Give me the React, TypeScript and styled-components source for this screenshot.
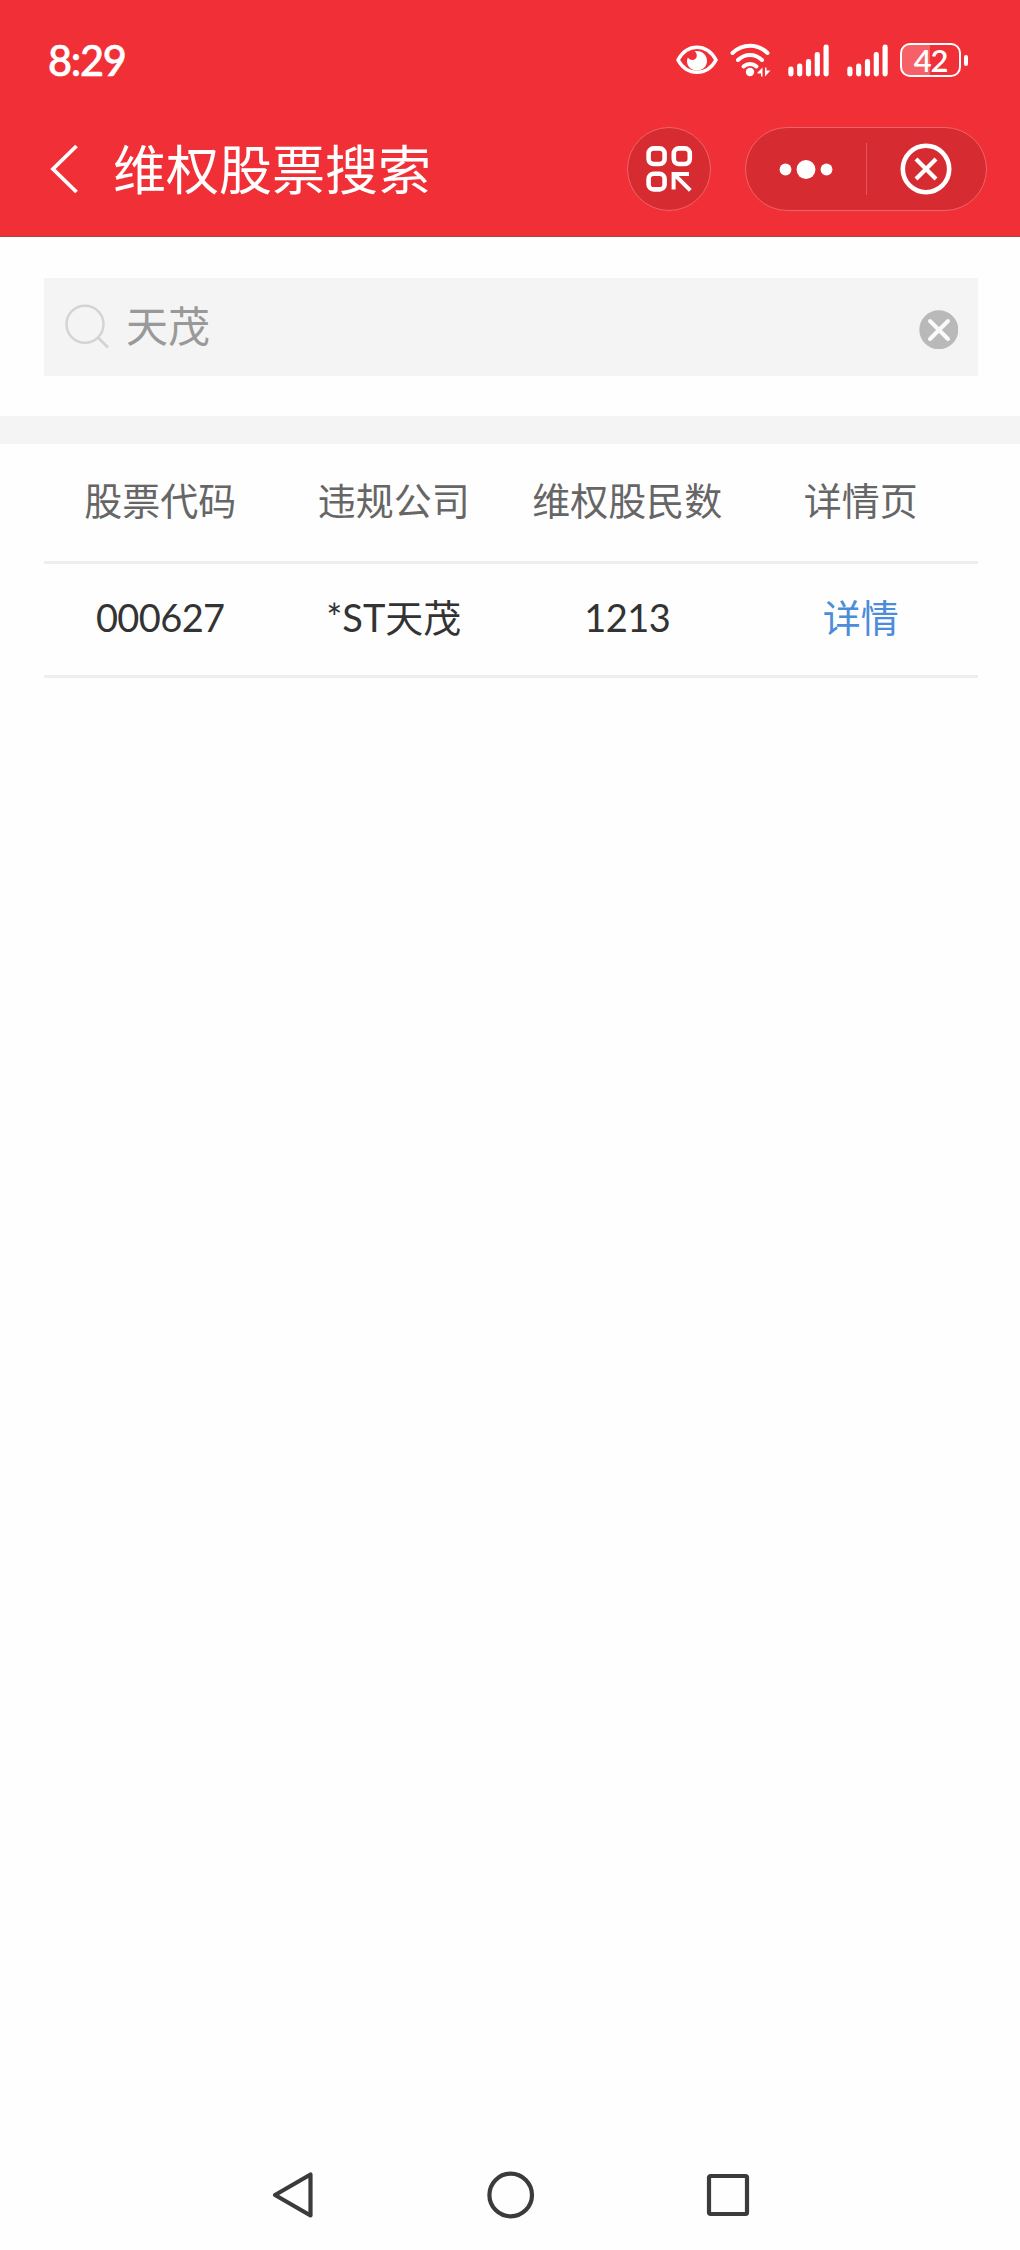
import React from 'react';
import styled, { createGlobalStyle } from 'styled-components';

const GlobalStyle = createGlobalStyle`
  * { box-sizing: border-box; }
  body {
    margin: 0;
    background: #fefefe;
    font-family: Lato, 'Noto Sans CJK SC', sans-serif;
  }
  svg { display: block; flex: none; }
`;

const Screen = styled.div`
  display: flex;
  flex-direction: column;
  width: 1020px;
  height: 2250px;
  background: #fefefe;
`;

const Header = styled.header`
  height: 237px;
  background: #f12f37;
  border-bottom: 1px solid #a8454d;
  color: #fff;
`;

const StatusBar = styled.div`
  display: flex;
  align-items: center;
  justify-content: space-between;
  height: 120px;
  padding: 0 52px 0 48px;
`;

const Clock = styled.time`
  font-size: 41.5px;
  font-weight: 500;
  line-height: 50px;
  letter-spacing: -1.3px;
  -webkit-text-stroke: 0.6px #fff;
`;

const StatusIcons = styled.div`
  display: flex;
  align-items: center;
`;

const Battery = styled.div`
  display: flex;
  align-items: center;
  gap: 3px;
  margin-left: 12px;
`;

const BatteryBody = styled.div<{ $level: number }>`
  display: flex;
  align-items: center;
  justify-content: center;
  width: 61px;
  height: 34px;
  padding-bottom: 1px;
  border: 2px solid #fff;
  border-radius: 10px;
  background: linear-gradient(
    to right,
    #f66067 ${(p) => p.$level}%,
    transparent ${(p) => p.$level}%
  );
  font-size: 31px;
  font-weight: 600;
  line-height: 30px;
  letter-spacing: -1.2px;
`;

const BatteryCap = styled.div`
  width: 4px;
  height: 11px;
  border-radius: 2px;
  background: #fff;
`;

const TitleBar = styled.div`
  display: flex;
  align-items: center;
  height: 98px;
  padding: 0 33px 0 48px;
`;

const Title = styled.h1`
  flex: 1;
  margin: 0 0 0 32px;
  padding-top: 2px;
  font-size: 53px;
  font-weight: 400;
  line-height: 64px;
`;

const Capsule = styled.div<{ $width: number }>`
  display: flex;
  align-items: center;
  justify-content: center;
  width: ${(p) => p.$width}px;
  height: 84px;
  border: 1px solid #ee636a;
  border-radius: 42px;
  background: #d62b31;
`;

const Actions = styled.div`
  display: flex;
  gap: 34px;
`;

const CapsuleHalf = styled.div`
  display: flex;
  flex: 1;
  align-items: center;
  justify-content: center;
`;

const CapsuleDivider = styled.div`
  width: 1px;
  height: 52px;
  background: #e8545a;
`;

const SearchSection = styled.section`
  padding: 41px 42.5px 40px 43.5px;
  border-bottom: 28px solid #f4f4f4;
`;

const SearchBox = styled.div`
  display: flex;
  align-items: center;
  height: 98px;
  padding: 0 20px;
  background: #f4f4f4;
`;

const Query = styled.span`
  flex: 1;
  margin-left: 16.5px;
  padding-bottom: 2px;
  color: #999;
  font-size: 42px;
  line-height: 50px;
`;

const Table = styled.div`
  margin: 0 42.5px 0 43.5px;
`;

const Row = styled.div<{ $height: number; $color: string }>`
  display: grid;
  grid-template-columns: repeat(4, 1fr);
  align-items: center;
  height: ${(p) => p.$height}px;
  padding-bottom: 5px;
  border-bottom: 3px solid #eee;
  color: ${(p) => p.$color};
  font-size: 38px;
  line-height: 46px;
  text-align: center;
`;

const NumberCell = styled.span`
  letter-spacing: -0.6px;
`;

const DetailLink = styled.span`
  color: #4b8cdb;
`;

const NavBar = styled.nav`
  display: flex;
  align-items: center;
  justify-content: space-between;
  height: 110px;
  margin-top: auto;
  padding: 0 269px 0 270px;
`;

const EyeIcon = () => (
  <svg width="42" height="30" viewBox="0 0 42 30" fill="none">
    <path d="M2 15C7 6 13.5 2.3 21 2.3S35 6 40 15C35 24 28.5 27.3 21 27.3S7 24 2 15Z" stroke="#fff" strokeWidth="3.6" strokeLinejoin="round" />
    <path d="M20.500 6C27 6 31 10.500 31 16S26.500 25.500 21 25.500S11 21.500 11 16.500C11 15 11.400 13.500 12 12.500C14 16.300 20.500 15.500 20.800 11C20.900 9 20 7 18.500 6.200Z" fill="#fff" />
  </svg>
);

const WifiIcon = () => (
  <svg width="41" height="34" viewBox="0 0 41 34" fill="none" style={{ marginLeft: 12 }}>
    <g stroke="#fff" strokeWidth="4" strokeLinecap="round">
      <path d="M2.500 10C12.500 .3 27.500 .3 37.500 10" />
      <path d="M8 17C15 10.300 25 10.300 32 17" />
      <path d="M13.500 23.500C17.300 20 22.700 20 26.500 23.500" />
    </g>
    <circle cx="20" cy="29" r="4.200" fill="#fff" />
    <path d="M27.500 29.500L32.500 24.500V33.500H31V30.500H27.500ZM35 33.500V24.500H36.500V27.500H40.500Z" fill="#fff" />
  </svg>
);

const BAR_HEIGHTS = [10, 13, 17.5, 24.5, 32];

const SignalIcon = ({ gap }: { gap: number }) => (
  <svg width="41" height="33" viewBox="0 0 41 33" style={{ marginLeft: gap }}>
    {BAR_HEIGHTS.map((h, i) => (
      <rect key={h} x={0.3 + i * 8.8} y={32.5 - h} width="5.2" height={h} rx="2.4" fill="#fff" />
    ))}
  </svg>
);

const BackIcon = () => (
  <svg width="33" height="54" viewBox="0 0 33 54" fill="none">
    <path d="M28.5 4L5 27L28.5 50" stroke="#fff" strokeWidth="3.8" />
  </svg>
);

const ScanIcon = () => (
  <svg width="48" height="48" viewBox="0 0 48 48" fill="none" stroke="#fff" strokeWidth="4.6">
    <rect x="3.6" y="3.4" width="16" height="15.6" rx="5" />
    <rect x="28.8" y="3.4" width="16" height="15.6" rx="5" />
    <rect x="3.6" y="28.8" width="16" height="15.6" rx="5" />
    <path d="M44 29H28.600V44.500M29 29.200L45.300 45.400" strokeWidth="4" />
  </svg>
);

const MoreIcon = () => (
  <svg width="54" height="20" viewBox="0 0 54 20" fill="#fff">
    <circle cx="6.5" cy="10.5" r="5.9" />
    <circle cx="27" cy="10.5" r="9.4" />
    <circle cx="47.5" cy="10.5" r="5.9" />
  </svg>
);

const CloseIcon = () => (
  <svg width="52" height="52" viewBox="0 0 52 52" fill="none" stroke="#fff" strokeWidth="4.6">
    <circle cx="26" cy="26" r="23.2" />
    <path d="M16 16L36 36M36 16L16 36" strokeWidth="4.2" />
  </svg>
);

const SearchIcon = () => (
  <svg width="46" height="46" viewBox="0 0 46 46" fill="none" stroke="#d3d3d3" strokeWidth="2.4">
    <circle cx="21" cy="20.3" r="18.5" />
    <path d="M34 33.5L44 43.5" strokeWidth="2.8" />
  </svg>
);

const ClearIcon = () => (
  <svg width="39" height="39" viewBox="0 0 39 39" fill="none" style={{ marginTop: 5 }}>
    <circle cx="19.8" cy="19.8" r="19.5" fill="#b9b9b9" />
    <path d="M11 11L29 29M29 11L11 29" stroke="#fafafa" strokeWidth="4" strokeLinecap="round" />
  </svg>
);

const NavIcon = ({ children }: { children: React.ReactNode }) => (
  <svg width="48" height="48" viewBox="0 0 48 48" fill="none" stroke="#3b3b3b" strokeWidth="4.2" strokeLinejoin="round">
    {children}
  </svg>
);

const COLUMNS = ['股票代码', '违规公司', '维权股民数', '详情页'];
const STOCKS = [{ code: '000627', company: '*ST天茂', holders: '1213' }];

export default function App() {
  return (
    <Screen>
      <GlobalStyle />
      <Header>
        <StatusBar>
          <Clock>8:29</Clock>
          <StatusIcons>
            <EyeIcon />
            <WifiIcon />
            <SignalIcon gap={17} />
            <SignalIcon gap={18} />
            <Battery>
              <BatteryBody $level={50}>42</BatteryBody>
              <BatteryCap />
            </Battery>
          </StatusIcons>
        </StatusBar>
        <TitleBar>
          <BackIcon />
          <Title>维权股票搜索</Title>
          <Actions>
            <Capsule $width={84}>
              <ScanIcon />
            </Capsule>
            <Capsule $width={242}>
              <CapsuleHalf>
                <MoreIcon />
              </CapsuleHalf>
              <CapsuleDivider />
              <CapsuleHalf>
                <CloseIcon />
              </CapsuleHalf>
            </Capsule>
          </Actions>
        </TitleBar>
      </Header>
      <SearchSection>
        <SearchBox>
          <SearchIcon />
          <Query>天茂</Query>
          <ClearIcon />
        </SearchBox>
      </SearchSection>
      <Table>
        <Row $height={120} $color="#666">
          {COLUMNS.map((name) => (
            <span key={name}>{name}</span>
          ))}
        </Row>
        {STOCKS.map((stock) => (
          <Row key={stock.code} $height={114} $color="#333">
            <NumberCell>{stock.code}</NumberCell>
            <span>{stock.company}</span>
            <NumberCell>{stock.holders}</NumberCell>
            <DetailLink>详情</DetailLink>
          </Row>
        ))}
      </Table>
      <NavBar>
        <NavIcon>
          <path d="M5 24L40.5 3.5V44.5Z" />
        </NavIcon>
        <NavIcon>
          <circle cx="23.7" cy="24" r="21.3" />
        </NavIcon>
        <NavIcon>
          <rect x="6" y="5" width="38" height="38" rx="1.5" />
        </NavIcon>
      </NavBar>
    </Screen>
  );
}
